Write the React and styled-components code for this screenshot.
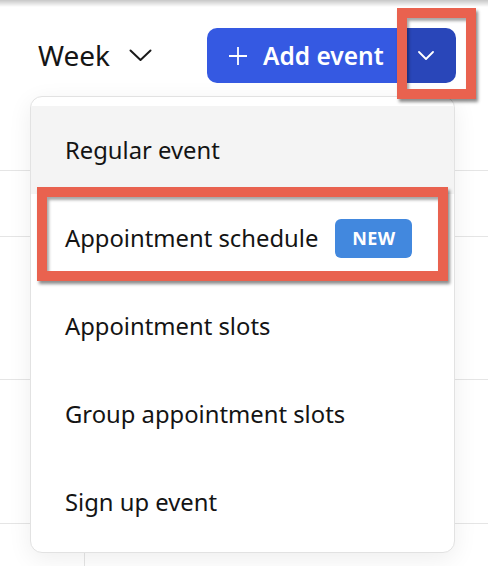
import React from 'react';
import styled, { createGlobalStyle } from 'styled-components';

const GlobalStyle = createGlobalStyle`
    html, body {
        margin: 0;
        padding: 0;
        background: #fff;
    }
    body {
        font-family: "Noto Sans", "Open Sans", Arial, sans-serif;
        color: #111;
    }
`

const Page = styled.div`
    position: relative;
    width: 488px;
    height: 566px;
    overflow: hidden;
    background: #fff;
`

const TopShade = styled.div`
    position: absolute;
    top: 0;
    left: 0;
    right: 0;
    height: 7px;
    background: linear-gradient(to bottom, rgba(0,0,0,0.22), rgba(0,0,0,0));
`

const Toolbar = styled.div`
    display: flex;
    align-items: center;
    height: 111px;
    padding: 0 32px 0 38px;
    box-sizing: border-box;
`

const ViewPicker = styled.div`
    display: flex;
    align-items: center;
    gap: 19px;
    font-size: 28px;
    color: #151515;
    margin-top: -2px;
    svg {
        width: 23px;
        height: 13px;
        margin-top: 1px;
    }
`

const SplitButton = styled.div`
    margin-left: auto;
    display: flex;
    flex-shrink: 0;
    width: 249px;
    height: 55px;
    border-radius: 10px;
    overflow: hidden;
`

const MainPart = styled.div`
    display: flex;
    align-items: center;
    gap: 15px;
    width: 190px;
    flex-shrink: 0;
    padding-left: 21px;
    box-sizing: border-box;
    background: #3559e2;
    color: #fff;
    font-size: 24.5px;
    font-weight: 600;
    svg {
        width: 20px;
        height: 20px;
    }
`

const CaretPart = styled.div`
    display: flex;
    align-items: center;
    justify-content: center;
    flex: 1;
    background: #2946b9;
    padding-right: 2px;
    svg {
        width: 16px;
        height: 9px;
    }
`

const Grid = styled.div`
    display: flex;
    flex-direction: column;
`

const GridRow = styled.div`
    height: ${p => p.$h}px;
    border-bottom: 1px solid #e5e5e5;
    box-sizing: border-box;
    display: flex;
`

const GridCell = styled.div`
    width: ${p => p.$w}px;
    border-right: ${p => p.$line ? '1px solid #e5e5e5' : 'none'};
    box-sizing: border-box;
`

const Menu = styled.div`
    position: absolute;
    left: 30px;
    top: 96px;
    width: 425px;
    height: 457px;
    box-sizing: border-box;
    padding: 9px 0 6px;
    border: 1px solid #e2e2e2;
    border-radius: 12px;
    background: #fff;
    box-shadow: 0 6px 24px rgba(0,0,0,0.07);
`

const MenuItem = styled.div`
    display: flex;
    align-items: center;
    height: 88px;
    padding-left: 34px;
    font-size: 23.8px;
    color: #141414;
    background: ${p => p.$active ? '#f4f4f4' : 'transparent'};
`

const Badge = styled.span`
    display: inline-flex;
    align-items: center;
    justify-content: center;
    width: 77px;
    height: 39px;
    margin-left: 17px;
    border-radius: 6px;
    background: #4288de;
    color: #fff;
    font-size: 18px;
    font-weight: 700;
    letter-spacing: 0.3px;
`

const Highlight = styled.div`
    position: absolute;
    left: ${p => p.$x}px;
    top: ${p => p.$y}px;
    width: ${p => p.$w}px;
    height: ${p => p.$h}px;
    box-sizing: border-box;
    border: 10px solid #e9624f;
    box-shadow: 2px 3px 3px rgba(0,0,0,0.45), inset 2px 3px 3px rgba(0,0,0,0.35);
`

const Chevron = ({ color, width = 2 }) => (
    <svg viewBox="0 0 23 13" fill="none">
        <path d="M1.5 1.5 L11.5 11 L21.5 1.5" stroke={color} strokeWidth={width} strokeLinecap="round" strokeLinejoin="round" />
    </svg>
)

const items = [
    { label: 'Regular event', active: true },
    { label: 'Appointment schedule', badge: 'NEW' },
    { label: 'Appointment slots' },
    { label: 'Group appointment slots' },
    { label: 'Sign up event' },
]

const App = () => {
    return (
        <Page>
            <GlobalStyle />
            <TopShade />
            <Toolbar>
                <ViewPicker>
                    Week
                    <Chevron color="#1a1a1a" />
                </ViewPicker>
                <SplitButton>
                    <MainPart>
                        <svg viewBox="0 0 20 20" fill="none">
                            <path d="M10 1 V19 M1 10 H19" stroke="#fff" strokeWidth="1.8" />
                        </svg>
                        Add event
                    </MainPart>
                    <CaretPart>
                        <svg viewBox="0 0 16 9" fill="none">
                            <path d="M1 1 L8 8 L15 1" stroke="#fff" strokeWidth="1.8" strokeLinecap="round" strokeLinejoin="round" />
                        </svg>
                    </CaretPart>
                </SplitButton>
            </Toolbar>
            <Grid>
                <GridRow $h={60} />
                <GridRow $h={66} />
                <GridRow $h={143} />
                <GridRow $h={144} />
                <GridRow $h={60}>
                    <GridCell $w={85} $line />
                </GridRow>
            </Grid>
            <Menu>
                {items.map(item => (
                    <MenuItem key={item.label} $active={item.active}>
                        {item.label}
                        {item.badge && <Badge>{item.badge}</Badge>}
                    </MenuItem>
                ))}
            </Menu>
            <Highlight $x={397} $y={8} $w={79} $h={91} />
            <Highlight $x={37} $y={187} $w={411} $h={94} />
        </Page>
    )
}

export default App
